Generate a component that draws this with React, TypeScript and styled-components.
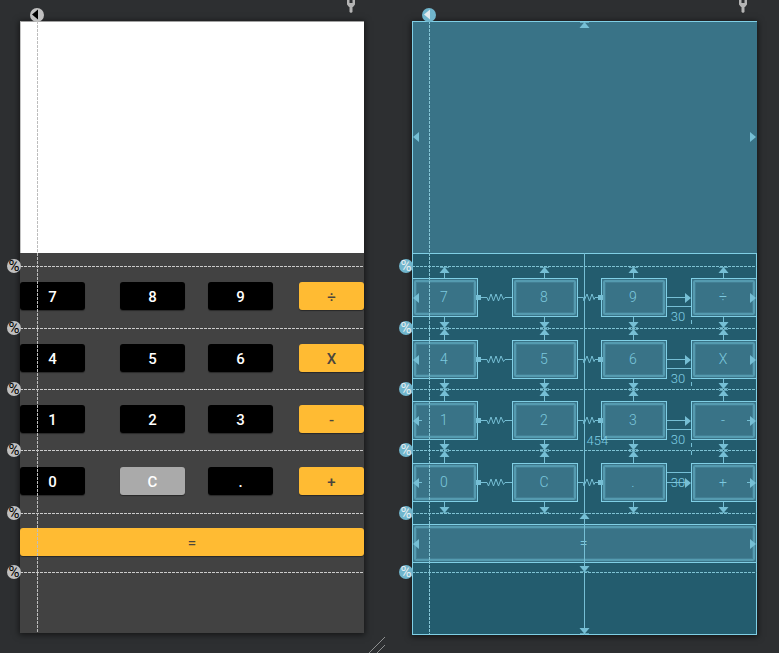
import React from "react";
import styled, { createGlobalStyle, css } from "styled-components";

const LINE = "#76bfd5";
const LINE_BRIGHT = "#80cfe5";

const GlobalStyle = createGlobalStyle`
  *, *::before, *::after { box-sizing: border-box; }
  body {
    margin: 0;
    background: #2d2f31;
    font-family: Roboto, "Liberation Sans", sans-serif;
    overflow: hidden;
  }
  button { font: inherit; margin: 0; padding: 0; border: 0; cursor: pointer; }
`;

const Editor = styled.main`
  display: grid;
  grid-template-columns: 344fr 345fr;
  column-gap: 48px;
  align-items: start;
  padding: 0 22px 0 20px;
`;

const Surface = styled.section`
  display: flex;
  flex-direction: column;
  min-width: 0;
`;

type Mode = { $blueprint: boolean };

const SurfaceHeader = styled.header<Mode>`
  display: flex;
  justify-content: flex-end;
  align-items: flex-start;
  height: 21px;
  padding-right: ${(p) => (p.$blueprint ? 10 : 9)}px;
`;

const ToolButton = styled.button`
  display: block;
  width: 8px;
  height: 13px;
  background: none;
`;

const Screen = styled.div<Mode>`
  position: relative;
  background: ${(p) => (p.$blueprint ? "#235c6e" : "#424242")};
  box-shadow: 0 1px 6px 1px rgba(0, 0, 0, 0.55);
  ${(p) => p.$blueprint && css`outline: 1px solid ${LINE_BRIGHT}; outline-offset: -1px;`}
`;

const Display = styled.output<Mode>`
  display: block;
  position: relative;
  height: 232px;
  background: ${(p) => (p.$blueprint ? "#397387" : "#ffffff")};
  border-top: 1px solid ${(p) => (p.$blueprint ? LINE_BRIGHT : "#a0a0a0")};
  border-left: 1px solid ${(p) => (p.$blueprint ? LINE_BRIGHT : "#c4c4c4")};
`;

const DisplayGap = styled.div<Mode>`
  height: 13px;
  border-top: ${(p) => (p.$blueprint ? `1px solid ${LINE_BRIGHT}` : "none")};
`;

const Footer = styled.div<Mode>`
  height: ${(p) => (p.$blueprint ? 62 : 60)}px;
`;

const Guideline = styled.div<Mode>`
  position: relative;
  height: 1px;
  background: repeating-linear-gradient(
    90deg,
    ${(p) => (p.$blueprint ? "#7fc3d4" : "#cccccc")} 0 3px,
    transparent 3px 4px
  );
`;

const VerticalGuideline = styled.div<Mode>`
  position: absolute;
  z-index: 3;
  top: 0;
  bottom: 0;
  left: 17px;
  width: 1px;
  pointer-events: none;
  background: repeating-linear-gradient(
    180deg,
    ${(p) => (p.$blueprint ? "#86c6d6" : "#bdbdbd")} 0 3px,
    transparent 3px 4px
  );
`;

const Badge = styled.span<Mode>`
  position: absolute;
  display: flex;
  align-items: center;
  justify-content: center;
  width: 14px;
  height: 14px;
  border-radius: 50%;
  background: ${(p) => (p.$blueprint ? "#70b5cc" : "#c0c0c0")};
  color: ${(p) => (p.$blueprint ? "#e6eef1" : "#000000")};
  font-size: 15px;
  line-height: 14px;
`;

const PercentBadge = styled(Badge)`
  left: -13px;
  top: -7px;
`;

const StartBadge = styled(Badge)`
  left: -7px;
  top: -13px;
`;

const Band = styled.div<{ $height: number; $key: number }>`
  display: grid;
  grid-template-columns: ${(p) => `${p.$key}px ${p.$key === 66 ? "34fr" : "35fr"} ${p.$key}px 23fr ${p.$key}px ${p.$key === 66 ? "24fr" : "26fr"} ${p.$key}px`};
  height: ${(p) => p.$height}px;
`;

const WideBand = styled.div<{ $height: number; $lead: number }>`
  height: ${(p) => p.$height}px;
  padding-top: ${(p) => p.$lead}px;
`;

type Tone = "dark" | "light" | "accent";
const tones: Record<Tone, { bg: string; fg: string }> = {
  dark: { bg: "#000000", fg: "#ffffff" },
  light: { bg: "#aaaaaa", fg: "#ffffff" },
  accent: { bg: "#ffbb33", fg: "#4b463c" },
};

const Key = styled.button<{ $tone: Tone; $column?: number; $lead?: number }>`
  width: 100%;
  height: 28px;
  padding-top: 2px;
  margin-top: ${(p) => p.$lead ?? 0}px;
  grid-column: ${(p) => p.$column ?? "auto"};
  border-radius: 3px;
  background: ${(p) => tones[p.$tone].bg};
  color: ${(p) => tones[p.$tone].fg};
  box-shadow: 0 1px 1px rgba(0, 0, 0, 0.4);
  font-size: 15px;
  font-weight: 500;
  line-height: 26px;
`;

const KeyColumn = styled.div`
  display: flex;
  flex-direction: column;
  min-width: 0;
`;

const AnchorTrack = styled.div<{ $lead?: number }>`
  display: flex;
  flex-direction: column;
  align-self: center;
  width: 12px;
  ${(p) => (p.$lead !== undefined ? css`height: ${p.$lead}px;` : css`flex: 1;`)}
`;

const Stem = styled.span`
  flex: 1;
  width: 1px;
  margin-left: 5px;
  background: ${LINE};
`;

const Outline = styled.button`
  position: relative;
  display: flex;
  width: 100%;
  height: 39px;
  padding: 1px;
  border: 1px solid ${LINE_BRIGHT};
  background: #397387;
  color: #7cc8de;
  font-size: 14px;
  font-weight: 300;
`;

const OutlineFace = styled.span`
  flex: 1;
  border: 2px solid #559bb0;
  border-radius: 2px;
  box-shadow: inset 0 0 0 1px #427f94;
  line-height: 30px;
  text-align: center;
  padding-right: 2px;
`;

const EdgeMark = styled.span<{ $side: "left" | "right" }>`
  position: absolute;
  top: 50%;
  ${(p) => p.$side}: 0;
  display: flex;
  align-items: center;
  height: 10px;
  margin-top: -5px;
`;

const Link = styled.div<{ $lead: number }>`
  display: flex;
  align-items: center;
  height: 11px;
  margin-top: ${(p) => p.$lead}px;
`;

const Rule = styled.span<{ $grow?: number }>`
  flex: ${(p) => p.$grow ?? 1};
  height: 1px;
  background: ${LINE};
`;

const Handle = styled.span<{ $inset?: boolean }>`
  position: relative;
  z-index: 1;
  width: 5px;
  height: 5px;
  margin: ${(p) => (p.$inset ? "0 -2px 0 0" : "0 0 0 -2px")};
  background: ${LINE};
`;

const ShortRule = styled.span<{ $width: number }>`
  width: ${(p) => p.$width}px;
  height: 1px;
  background: ${LINE};
`;

const Dimension = styled.div`
  display: flex;
  flex-direction: column;
`;

const DimensionRule = styled.span<{ $above: number }>`
  height: 1px;
  margin-top: ${(p) => p.$above}px;
  background: ${LINE};
`;

const DimensionRow = styled.div`
  display: flex;
  align-items: flex-end;
  margin-top: 2px;
`;

const Measure = styled.span`
  flex: 1;
  padding-right: 2px;
  text-align: center;
  font-size: 13px;
  font-weight: 300;
  line-height: 15px;
  color: ${LINE_BRIGHT};
`;

const Tick = styled.span`
  align-self: flex-end;
  width: 1px;
  height: 4px;
  margin-right: -1px;
  background: ${LINE};
`;

const Overlap = styled.div`
  display: grid;
  align-items: center;
  height: 19px;
  > * { grid-area: 1 / 1; margin-top: 0; }
`;

const MarginLine = styled.div`
  position: absolute;
  z-index: 2;
  top: 232px;
  bottom: 0;
  left: calc(50% - 1px);
  width: 1px;
  background: ${LINE};
  pointer-events: none;
`;

const MarginValue = styled.span`
  position: absolute;
  left: 3px;
  top: calc(50% - 11px);
  font-size: 13px;
  font-weight: 300;
  line-height: 15px;
  color: ${LINE_BRIGHT};
`;

const LineMark = styled.span<{ $top: number }>`
  position: absolute;
  left: -5px;
  top: ${(p) => p.$top}px;
  line-height: 0;
`;

const DisplayMark = styled.span<{ $at: "top" | "left" | "right" }>`
  position: absolute;
  line-height: 0;
  ${(p) => p.$at === "top" && css`top: 0; left: calc(50% - 6px);`}
  ${(p) => p.$at === "left" && css`top: 110px; left: 0;`}
  ${(p) => p.$at === "right" && css`top: 110px; right: 1px;`}
`;

const ResizeGrip = styled.div`
  align-self: flex-end;
  height: 20px;
  margin-right: -21px;
  padding-top: 4px;
`;

const Svg = styled.svg`
  display: block;
  flex: none;
`;

const Wrench = () => (
  <Svg width="8" height="13" viewBox="0 0 8 13">
    <path d="M0 0H2.5V3H5.5V0H8V4.5L6 7H5.5V12L4 13L2.5 12V7H2L0 4.5Z" fill="#b4b4b4" />
  </Svg>
);

const Triangle = ({ dir }: { dir: "up" | "down" | "left" | "right" }) => {
  if (dir === "up")
    return (
      <Svg width="12" height="6" viewBox="0 0 12 6">
        <path d="M5.5 0L10.5 6H.5Z" fill={LINE} />
        <path d="M1 .5H10" stroke={LINE} opacity=".7" />
      </Svg>
    );
  if (dir === "down")
    return (
      <Svg width="12" height="6" viewBox="0 0 12 6">
        <path d="M.5 0H10.5L5.5 6Z" fill={LINE} />
        <path d="M1 5.5H10" stroke={LINE} opacity=".7" />
      </Svg>
    );
  return (
    <Svg width="6" height="10" viewBox="0 0 6 10">
      <path d={dir === "left" ? "M6 0V10L0 5Z" : "M0 0V10L6 5Z"} fill={LINE} />
    </Svg>
  );
};

const Spring = ({ long }: { long?: boolean }) => (
  <Svg width={long ? 19 : 12} height="9" viewBox={long ? "0 0 19 9" : "0 0 12 9"}>
    <path
      d={long ? "M0 4.5H1L2.5 8L5 1L7.5 8L10 1L12.5 8L15 1L17.5 6.5L19 4.5" : "M0 4L1 8L4 1L6.5 8L9 1L11 6.5L12 4.5"}
      fill="none"
      stroke={LINE}
    />
  </Svg>
);

const StartArrow = ({ blueprint }: { blueprint: boolean }) => (
  <Svg width="14" height="14" viewBox="0 0 14 14">
    <path d="M2 6.5L8 1.5V11.5Z" fill={blueprint ? "#e2eaed" : "#000"} />
  </Svg>
);

type KeyDef = { label: string; tone: Tone };
type BandDef = { height: number; lead: number; stem: boolean; keys: KeyDef[] };

const row = (labels: string[], light = -1): KeyDef[] =>
  labels.map((label, i) => ({ label, tone: i === 3 ? "accent" : i === light ? "light" : "dark" }));

const bands: BandDef[] = [
  { height: 61, lead: 15, stem: false, keys: row(["7", "8", "9", "÷"]) },
  { height: 60, lead: 15, stem: false, keys: row(["4", "5", "6", "X"]) },
  { height: 60, lead: 15, stem: true, keys: row(["1", "2", "3", "-"]) },
  { height: 62, lead: 16, stem: true, keys: row(["0", "C", ".", "+"], 1) },
];

const equalsBand = { height: 58, lead: 14 };

const PercentGuideline = ({ blueprint }: { blueprint: boolean }) => (
  <Guideline $blueprint={blueprint}>
    <PercentBadge $blueprint={blueprint}>%</PercentBadge>
  </Guideline>
);

const Edge = ({ side, stem }: { side: "left" | "right"; stem: boolean }) => (
  <EdgeMark $side={side}>
    {side === "right" && stem && <ShortRule $width={3} />}
    <Triangle dir={side} />
    {side === "left" && stem && <ShortRule $width={3} />}
  </EdgeMark>
);

const BlueprintKey = ({ def, index, lead, stem }: { def: KeyDef; index: number; lead: number; stem: boolean }) => (
  <KeyColumn>
    <AnchorTrack $lead={lead}>
      <Triangle dir="up" />
      <Stem />
    </AnchorTrack>
    <Outline type="button">
      <OutlineFace>{def.label}</OutlineFace>
      {index === 0 && <Edge side="left" stem={stem} />}
      {index === 3 && <Edge side="right" stem={stem} />}
    </Outline>
    <AnchorTrack>
      <Stem />
      <Triangle dir="down" />
    </AnchorTrack>
  </KeyColumn>
);

const Connector = ({ index, lead, last }: { index: number; lead: number; last: boolean }) => {
  if (index === 0)
    return (
      <Link $lead={lead + 14}>
        <Handle />
        <Rule $grow={5} />
        <Spring long />
        <Rule $grow={8} />
      </Link>
    );
  if (index === 1)
    return (
      <Link $lead={lead + 14}>
        <Rule $grow={2} />
        <Spring />
        <Rule $grow={1} />
        <Handle $inset />
      </Link>
    );
  const arrow = (
    <Link $lead={last ? 0 : lead + 14}>
      <Rule />
      <Triangle dir="right" />
    </Link>
  );
  return last ? (
    <Dimension>
      <Tick />
      <DimensionRule $above={lead + 5} />
      <Overlap>
        {arrow}
        <Measure>30</Measure>
      </Overlap>
    </Dimension>
  ) : (
    <Dimension>
      {arrow}
      <DimensionRule $above={3} />
      <DimensionRow>
        <Measure>30</Measure>
        <Tick />
      </DimensionRow>
    </Dimension>
  );
};

const DesignBand = ({ band }: { band: BandDef }) => (
  <Band $height={band.height} $key={65}>
    {band.keys.map((k, i) => (
      <Key key={k.label} type="button" $tone={k.tone} $column={i * 2 + 1} $lead={band.lead}>
        {k.label}
      </Key>
    ))}
  </Band>
);

const BlueprintBand = ({ band, last }: { band: BandDef; last: boolean }) => {
  const lead = band.lead - 4;
  return (
    <Band $height={band.height} $key={66}>
      {band.keys.map((k, i) => (
        <React.Fragment key={k.label}>
          <BlueprintKey def={k} index={i} lead={lead} stem={band.stem} />
          {i < 3 && <Connector index={i} lead={lead} last={last} />}
        </React.Fragment>
      ))}
    </Band>
  );
};

const DeviceSurface = ({ blueprint }: { blueprint: boolean }) => (
  <Surface aria-label={blueprint ? "Blueprint" : "Design"}>
    <SurfaceHeader $blueprint={blueprint}>
      <ToolButton type="button" aria-label="Device settings">
        <Wrench />
      </ToolButton>
    </SurfaceHeader>
    <Screen $blueprint={blueprint}>
      <Display $blueprint={blueprint}>
        {blueprint && (
          <>
            <DisplayMark $at="top"><Triangle dir="up" /></DisplayMark>
            <DisplayMark $at="left"><Triangle dir="left" /></DisplayMark>
            <DisplayMark $at="right"><Triangle dir="right" /></DisplayMark>
          </>
        )}
      </Display>
      <DisplayGap $blueprint={blueprint} />
      {bands.map((band, i) => (
        <React.Fragment key={i}>
          <PercentGuideline blueprint={blueprint} />
          {blueprint ? <BlueprintBand band={band} last={i === bands.length - 1} /> : <DesignBand band={band} />}
        </React.Fragment>
      ))}
      <PercentGuideline blueprint={blueprint} />
      <WideBand $height={equalsBand.height} $lead={blueprint ? equalsBand.lead - 4 : equalsBand.lead}>
        {blueprint ? (
          <Outline type="button">
            <OutlineFace>=</OutlineFace>
            <Edge side="left" stem={false} />
            <Edge side="right" stem={false} />
          </Outline>
        ) : (
          <Key type="button" $tone="accent">=</Key>
        )}
      </WideBand>
      <PercentGuideline blueprint={blueprint} />
      <Footer $blueprint={blueprint} />
      <VerticalGuideline $blueprint={blueprint}>
        <StartBadge $blueprint={blueprint}>
          <StartArrow blueprint={blueprint} />
        </StartBadge>
      </VerticalGuideline>
      {blueprint && (
        <MarginLine>
          <LineMark $top={260}><Triangle dir="up" /></LineMark>
          <LineMark $top={313}><Triangle dir="down" /></LineMark>
          <LineMark $top={375}><Triangle dir="down" /></LineMark>
          <MarginValue>454</MarginValue>
        </MarginLine>
      )}
    </Screen>
    {!blueprint && (
      <ResizeGrip>
        <Svg width="16" height="16" viewBox="0 0 16 16">
          <path d="M0 16L16 0M8 16L16 8" stroke="#8d8f90" fill="none" />
        </Svg>
      </ResizeGrip>
    )}
  </Surface>
);

export default function App() {
  return (
    <>
      <GlobalStyle />
      <Editor>
        <DeviceSurface blueprint={false} />
        <DeviceSurface blueprint />
      </Editor>
    </>
  );
}
